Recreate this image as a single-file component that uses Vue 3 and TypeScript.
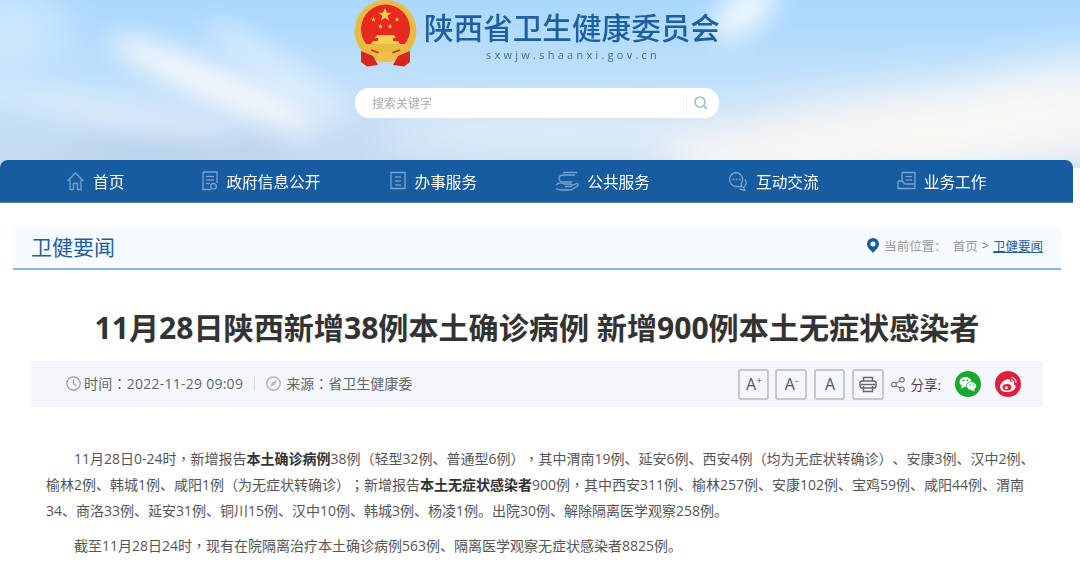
<script setup lang="ts">
import { ref } from 'vue'

const keyword = ref('')

const navItems = [
  { label: '首页', width: 19, tight: false, dots: false, shapes: ['M1.5 10 L9.5 2 L17.5 10', 'M4 8.5 V18.5 H7.5 V12.5 H11.5 V18.5 H15 V8.5'] },
  { label: '政府信息公开', width: 16, tight: true, dots: false, shapes: ['M1 1 H15 V12', 'M1 1 V18.5 H9', 'M4 5.5 H12', 'M4 9 H12', 'M4 12.5 H8', 'M11.5 12.5 a2.8 2.8 0 1 0 0.01 5.6 a2.8 2.8 0 1 0 -0.01 -5.6'] },
  { label: '办事服务', width: 18, tight: false, dots: false, shapes: ['M2 1.5 H16 V17.5 H2 Z', 'M6 6 H12', 'M6 10 H12', 'M6 14 H12'] },
  { label: '公共服务', width: 24, tight: false, dots: false, shapes: ['M20 4 H9 Q4 4 4 7.5 Q4 11 9 11 H17', 'M8 1.5 H22', 'M1 14 Q5 10.5 9 13 H16 Q18 14 15.5 15.5 H10', 'M16 15 L22 12.5 Q24 13 22.5 15 L16 19 H5 L1 17.5'] },
  { label: '互动交流', width: 20, tight: false, dots: true, shapes: ['M8.5 1.5 A7 7 0 1 0 8.5 15.5 H14 L13 12.8 A7 7 0 0 0 8.5 1.5 Z', 'M17 8.5 A5.5 5.5 0 0 1 15.5 16.5 L17 19.5 L11.5 18'] },
  { label: '业务工作', width: 19, tight: false, dots: false, shapes: ['M5 1.5 H18 V13', 'M5 1.5 V10', 'M8.5 5.5 H15', 'M8.5 9 H15', 'M1 10 H5 L8 13 H18', 'M1 10 V17.5 H18 V13'] },
]

// commas and semicolons sit centred in the reference, the TC face draws them that way
const splitPunct = (text: string) => text.split(/([，；])/).filter(Boolean)

// one entry per printed line, each line a list of plain and bold runs
const paragraphs = [
  [
    [
      { text: '11月28日0-24时，新增报告', bold: false },
      { text: '本土确诊病例', bold: true },
      { text: '38例（轻型32例、普通型6例），其中渭南19例、延安6例、西安4例（均为无症状转确诊）、安康3例、汉中2例、', bold: false },
    ],
    [
      { text: '榆林2例、韩城1例、咸阳1例（为无症状转确诊）；新增报告', bold: false },
      { text: '本土无症状感染者', bold: true },
      { text: '900例，其中西安311例、榆林257例、安康102例、宝鸡59例、咸阳44例、渭南', bold: false },
    ],
    [{ text: '34、商洛33例、延安31例、铜川15例、汉中10例、韩城3例、杨凌1例。出院30例、解除隔离医学观察258例。', bold: false }],
  ],
  [[{ text: '截至11月28日24时，现有在院隔离治疗本土确诊病例563例、隔离医学观察无症状感染者8825例。', bold: false }]],
]
</script>

<template>
  <div class="page">
    <header class="top">
      <svg class="sky" width="1080" height="168" viewBox="0 0 1080 168" aria-hidden="true">
        <defs>
          <linearGradient id="skyBase" x1="0" y1="0" x2="0" y2="1">
            <stop offset="0" stop-color="#a9d8fe" />
            <stop offset="0.55" stop-color="#c3e1fa" />
            <stop offset="1" stop-color="#c6d9ed" />
          </linearGradient>
          <filter id="soft" x="-30%" y="-60%" width="160%" height="220%">
            <feGaussianBlur stdDeviation="12" />
          </filter>
          <filter id="softer" x="-30%" y="-60%" width="160%" height="220%">
            <feGaussianBlur stdDeviation="22" />
          </filter>
        </defs>
        <rect width="1080" height="168" fill="url(#skyBase)" />
        <g filter="url(#soft)">
          <ellipse cx="215" cy="85" rx="115" ry="17" transform="rotate(24 215 85)" fill="#f8f8fb" opacity="0.95" />
          <ellipse cx="280" cy="72" rx="90" ry="16" transform="rotate(34 280 72)" fill="#fff" opacity="0.4" />
          <ellipse cx="110" cy="112" rx="130" ry="11" transform="rotate(10 110 112)" fill="#fff" opacity="0.45" />
          <ellipse cx="175" cy="150" rx="110" ry="10" fill="#a9c8e6" opacity="0.55" />
          <ellipse cx="745" cy="10" rx="40" ry="20" transform="rotate(-40 745 10)" fill="#fff" opacity="0.75" />
        </g>
        <g filter="url(#softer)">
          <ellipse cx="930" cy="135" rx="270" ry="48" transform="rotate(-6 930 135)" fill="#f9f7f4" />
          <ellipse cx="1010" cy="90" rx="120" ry="18" transform="rotate(-14 1010 90)" fill="#fbfaf8" opacity="0.8" />
          <ellipse cx="560" cy="135" rx="180" ry="26" fill="#fff" opacity="0.5" />
          <ellipse cx="0" cy="30" rx="70" ry="50" fill="#d4ebfd" opacity="0.7" />
        </g>
      </svg>
      <div class="banner">
        <div class="logo">
          <svg class="emblem" width="63" height="67" viewBox="0 0 63 67">
            <defs>
              <path id="star" d="M0 -1 L0.29 -0.31 L0.95 -0.31 L0.36 0.12 L0.59 0.81 L0 0.38 L-0.59 0.81 L-0.36 0.12 L-0.95 -0.31 L-0.29 -0.31 Z" />
            </defs>
            <circle cx="31.5" cy="31" r="31" fill="#e8bb45" />
            <path d="M12.1 44 A24.5 24.5 0 1 1 50.9 44 Z" fill="#e8291f" />
            <g fill="#f4cf55">
              <use href="#star" transform="translate(31 15) scale(7)" />
              <use href="#star" transform="translate(19.5 19.5) scale(2.8)" />
              <use href="#star" transform="translate(43 19.5) scale(2.8)" />
              <use href="#star" transform="translate(26.5 26.5) scale(2.8)" />
              <use href="#star" transform="translate(36 26.5) scale(2.8)" />
              <path d="M23 35 H40 L42 38 H39 V41 H44 L46 44 H17 L19 41 H24 V38 H21 Z" />
            </g>
            <path d="M17 50 Q31.5 57 46 50" fill="none" stroke="#d8301f" stroke-width="1.4" />
            <path d="M7 51 L19 56 L24 65 L13 66.5 L7 62 Z M56 51 L44 56 L39 65 L50 66.5 L56 62 Z" fill="#d8251d" />
            <path d="M25 52 H38 L41 58 L37 63 L31.5 60 L26 63 L22 58 Z" fill="#eec24a" />
          </svg>
          <div class="logo-text">
            <div class="logo-name">陕西省卫生健康委员会</div>
            <div class="logo-url">sxwjw.shaanxi.gov.cn</div>
          </div>
        </div>
        <div class="search">
          <input v-model="keyword" class="search-input" type="text" placeholder="搜索关键字" />
          <span class="search-line"></span>
          <svg width="14" height="14" viewBox="0 0 14 14" fill="none" stroke="#a9bccb" stroke-width="1.7">
            <circle cx="6" cy="6" r="5" />
            <path d="M9.8 9.8 L13 13" />
          </svg>
        </div>
      </div>
      <nav class="nav">
        <a v-for="item in navItems" :key="item.label" class="nav-item" :class="{ tight: item.tight }">
          <svg :width="item.width" height="20" :viewBox="`0 0 ${item.width} 20`" fill="none" stroke="#7ba3cb" stroke-width="1.3">
            <path v-for="d in item.shapes" :key="d" :d="d" />
            <g v-if="item.dots" fill="#7ba3cb" stroke="none">
              <circle cx="5.5" cy="8.5" r="0.9" />
              <circle cx="8.5" cy="8.5" r="0.9" />
              <circle cx="11.5" cy="8.5" r="0.9" />
            </g>
          </svg>
          <span>{{ item.label }}</span>
        </a>
      </nav>
    </header>

    <section class="section-head">
      <h2>卫健要闻</h2>
      <div class="crumbs">
        <svg width="12" height="15" viewBox="0 0 12 15">
          <path d="M6 0 A6 6 0 0 1 12 6 C12 9.5 8 12.5 6 15 C4 12.5 0 9.5 0 6 A6 6 0 0 1 6 0 Z M6 3.5 A2.5 2.5 0 1 0 6 8.5 A2.5 2.5 0 1 0 6 3.5 Z" fill="#185c9f" fill-rule="evenodd" />
        </svg>
        <span class="crumb-label">当前位置：</span>
        <span class="crumb-home">首页</span>
        <span class="crumb-sep">&gt;</span>
        <a class="crumb-link">卫健要闻</a>
      </div>
    </section>

    <article class="article">
      <h1>11月28日陕西新增38例本土确诊病例 新增900例本土无症状感染者</h1>
      <div class="meta">
        <div class="meta-left">
          <svg width="15" height="15" viewBox="0 0 15 15" fill="none" stroke="#999" stroke-width="1.2">
            <circle cx="7.5" cy="7.5" r="6.7" />
            <path d="M7.5 3.5 V8 L10.5 9.5" />
          </svg>
          <span class="meta-time">时间：2022-11-29 09:09</span>
          <span class="meta-line"></span>
          <svg width="15" height="15" viewBox="0 0 15 15" fill="none" stroke="#aaa" stroke-width="1.2">
            <circle cx="7.5" cy="7.5" r="6.7" />
            <path d="M11 4 L8.8 8.8 L4 11 L6.2 6.2 Z" fill="#bbb" stroke="none" />
          </svg>
          <span class="meta-source">来源：省卫生健康委</span>
        </div>
        <div class="meta-right">
          <button class="tool a-plus">A<sup>+</sup></button>
          <button class="tool a-minus">A<sup>-</sup></button>
          <button class="tool a-normal">A</button>
          <button class="tool print">
            <svg width="18" height="17" viewBox="0 0 18 17" fill="none" stroke="#666" stroke-width="1.4">
              <path d="M4.5 5 V1.5 H13.5 V5" />
              <rect x="1" y="5" width="16" height="7" rx="2" />
              <path d="M1.5 8.5 H16.5" />
              <path d="M4.5 10 V15.5 H13.5 V10" />
            </svg>
          </button>
          <svg class="share-icon" width="14" height="15" viewBox="0 0 14 15" fill="none" stroke="#777" stroke-width="1.1">
            <circle cx="3" cy="7.5" r="2.3" />
            <circle cx="11" cy="2.8" r="2.2" />
            <circle cx="11" cy="12.2" r="2.2" />
            <path d="M5 6.3 L9 3.9 M5 8.7 L9 11.1" />
          </svg>
          <span class="share-text">分享:</span>
          <svg class="wechat" width="26" height="26" viewBox="0 0 26 26">
            <circle cx="13" cy="13" r="13" fill="#17a82f" />
            <ellipse cx="10.5" cy="11" rx="6" ry="5" fill="#fff" />
            <path d="M7 14 L6 18 L10 15.5 Z" fill="#fff" />
            <ellipse cx="16.5" cy="15" rx="5" ry="4.2" fill="#fff" stroke="#17a82f" stroke-width="0.8" />
            <path d="M18.5 18 L20 20.5 L16 19 Z" fill="#fff" />
            <circle cx="8.5" cy="9.5" r="0.9" fill="#17a82f" />
            <circle cx="12.5" cy="9.5" r="0.9" fill="#17a82f" />
            <circle cx="15" cy="14" r="0.7" fill="#17a82f" />
            <circle cx="18.3" cy="14" r="0.7" fill="#17a82f" />
          </svg>
          <svg class="weibo" width="26" height="26" viewBox="0 0 26 26">
            <circle cx="13" cy="13" r="13" fill="#df1f3c" />
            <path d="M5 16 C5 12 10 8 13.5 8 C15.5 8 15.5 10 15 11 C17 10.5 19.5 11 19 13.5 C21 14 21 16 20 17.5 C18 20.5 14 21 11.5 21 C8 21 5 19 5 16 Z" fill="#fff" />
            <ellipse cx="12" cy="16.3" rx="4.4" ry="3.3" fill="#df1f3c" />
            <circle cx="11.3" cy="16.7" r="1.5" fill="#fff" />
            <path d="M16 6.5 A5 5 0 0 1 21 12 M16 9 A2.5 2.5 0 0 1 18.5 11.7" fill="none" stroke="#fff" stroke-width="1.2" />
          </svg>
        </div>
      </div>
      <div class="content">
        <p v-for="(para, i) in paragraphs" :key="i">
          <span v-for="(line, n) in para" :key="n" class="line" :class="{ first: n === 0 }">
            <template v-for="(part, j) in line" :key="j">
              <strong v-if="part.bold">{{ part.text }}</strong>
              <template v-else>
                <template v-for="(seg, k) in splitPunct(part.text)" :key="k">
                  <span v-if="seg === '，' || seg === '；'" class="punct">{{ seg }}</span>
                  <template v-else>{{ seg }}</template>
                </template>
              </template>
            </template>
          </span>
        </p>
      </div>
    </article>
  </div>
</template>

<style scoped>
.page {
  width: 1080px;
  height: 574px;
  overflow: hidden;
  background: #fff;
  font-family: "Open Sans", "Noto Sans CJK SC", sans-serif;
  text-spacing-trim: space-all;
}

.top {
  position: relative;
}

.sky {
  position: absolute;
  left: 0;
  top: 0;
  display: block;
}

.banner {
  position: relative;
  height: 160px;
  padding-left: 354px;
  box-sizing: border-box;
}

.logo {
  display: flex;
  height: 88px;
}

.emblem {
  flex: none;
  margin-right: 7px;
}

.logo-text {
  padding-top: 9px;
}

.logo-name {
  font-size: 29.6px;
  line-height: 38px;
  font-weight: 500;
  color: #1d5f9f;
  white-space: nowrap;
}

.logo-url {
  margin-top: 1px;
  margin-left: 62px;
  font-size: 11px;
  line-height: 14px;
  letter-spacing: 3.25px;
  color: #3f6f99;
  white-space: nowrap;
}

.search {
  width: 364px;
  height: 30px;
  margin-left: 1px;
  padding: 0 11px 0 17px;
  box-sizing: border-box;
  display: flex;
  align-items: center;
  background: #fff;
  border-radius: 14px;
}

.search-input {
  flex: 1;
  min-width: 0;
  border: 0;
  outline: 0;
  padding: 0;
  background: transparent;
  font-family: inherit;
  font-size: 12px;
}

.search-input::placeholder {
  color: #aaa;
}

.search-line {
  width: 1px;
  height: 13px;
  margin-right: 7px;
  background: #eee;
}

.nav {
  position: relative;
  width: 1073px;
  height: 43px;
  padding-left: 66px;
  box-sizing: border-box;
  display: flex;
  align-items: center;
  background: #175ca0;
  border-bottom: 1px solid #4a80b8;
  border-radius: 8px 8px 0 0;
}

.nav-item {
  display: flex;
  align-items: center;
  gap: 8px;
  margin-right: 78px;
  color: #fff;
  font-size: 15.7px;
  white-space: nowrap;
}

.nav-item.tight {
  margin-right: 68px;
}

.section-head {
  width: 1048px;
  height: 43px;
  margin: 24px 0 0 13px;
  padding: 0 18px 4px;
  box-sizing: border-box;
  display: flex;
  align-items: center;
  justify-content: space-between;
  background: #f7fbff;
  border-bottom: 2px solid #8db4e6;
}

.section-head h2 {
  margin: 0;
  font-size: 21px;
  font-weight: 400;
  color: #1d5f9f;
}

.crumbs {
  display: flex;
  align-items: center;
  font-size: 12.5px;
  color: #999;
}

.crumb-label {
  margin-left: 5px;
  margin-right: 6px;
}

.crumb-sep {
  margin: 0 4px;
  color: #666;
}

.crumb-link {
  color: #1d5f9f;
  text-decoration: underline;
}

.article {
  padding: 0 37px 0 31px;
}

.article h1 {
  margin: 36px 0 0;
  height: 44px;
  font-size: 30.1px;
  line-height: 44px;
  font-weight: 700;
  color: #333;
  text-align: center;
  white-space: nowrap;
}

.meta {
  height: 46px;
  margin-top: 11px;
  padding: 0 22px 0 35px;
  display: flex;
  align-items: center;
  justify-content: space-between;
  background: #f4f6fc;
  color: #666;
  font-size: 14px;
}

.meta-left,
.meta-right {
  display: flex;
  align-items: center;
}

.meta-left {
  margin-top: -2px;
  font-family: "Open Sans", "Noto Sans CJK TC", sans-serif;
}

.meta-time {
  margin-left: 3px;
  letter-spacing: 0.25px;
}

.meta-line {
  width: 1px;
  height: 15px;
  margin: 0 11px;
  background: #ddd;
}

.meta-source {
  margin-left: 5px;
}

.tool {
  width: 31px;
  height: 31px;
  margin-right: 6px;
  padding: 0;
  display: flex;
  align-items: center;
  justify-content: center;
  background: transparent;
  border: 2px solid #c6c6cc;
  border-radius: 3px;
  color: #555;
  font-family: inherit;
  font-size: 16px;
}

.tool sup {
  font-size: 10px;
  line-height: 1;
  margin-top: -8px;
}

.a-minus {
  width: 32px;
  margin-right: 7px;
}

.a-normal {
  margin-right: 7px;
}

.print {
  width: 32px;
  margin-right: 7px;
}

.share-text {
  margin-left: 5px;
  margin-right: 14px;
  color: #444;
  font-size: 13.5px;
}

.wechat {
  margin-right: 14px;
}

.content {
  margin-top: 38px;
  padding-left: 15px;
  font-size: 14px;
  line-height: 26.4px;
  color: #555;
}

.content p {
  margin: 0 0 8px;
}

.line {
  display: block;
  height: 26.4px;
  white-space: nowrap;
}

.line.first {
  text-indent: 28px;
}

.content strong {
  color: #333;
}

.punct {
  font-family: "Noto Sans CJK TC", sans-serif;
}
</style>
